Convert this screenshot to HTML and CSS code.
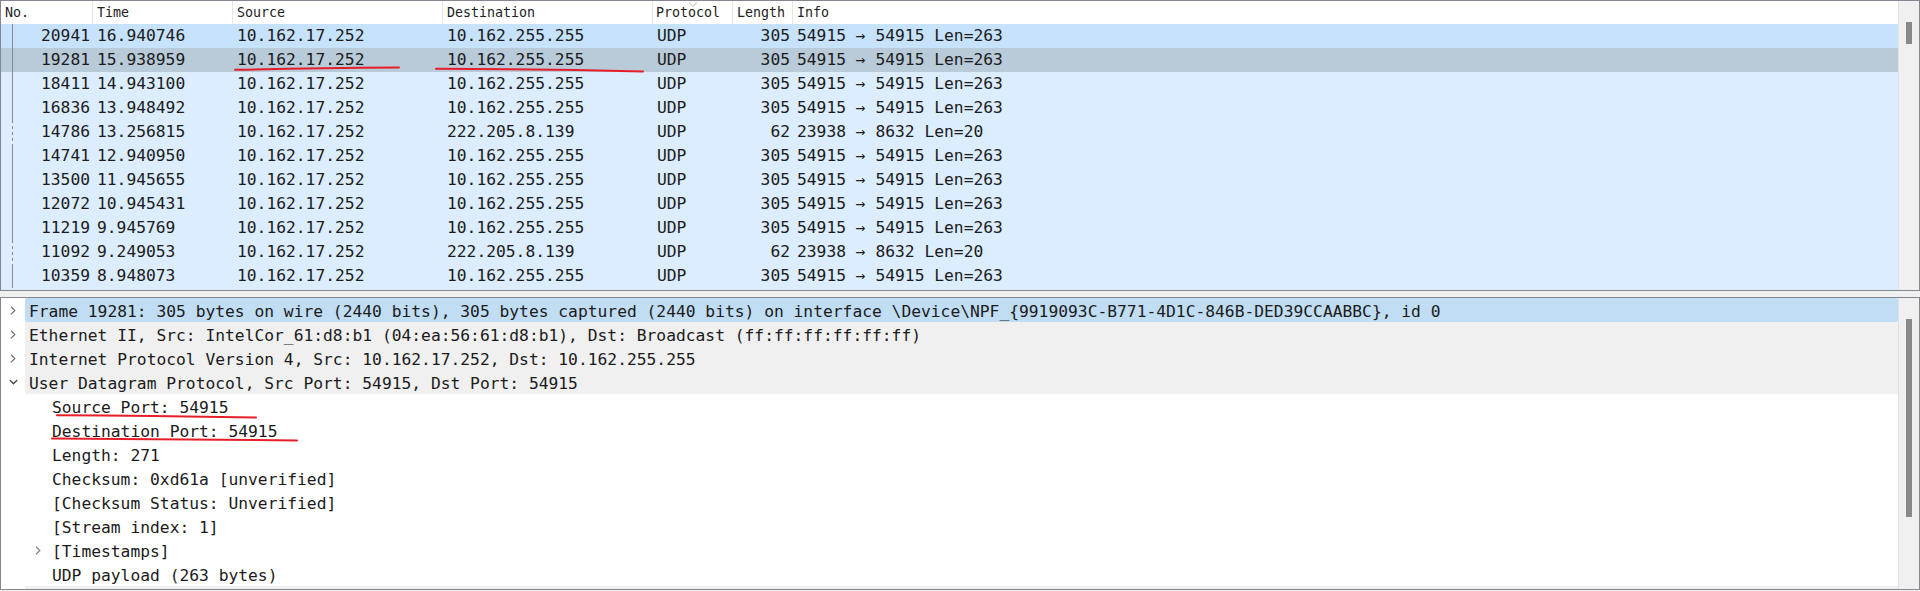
FILE: index.html
```html
<!DOCTYPE html>
<html>
<head>
<meta charset="utf-8">
<link rel="stylesheet" href="styles.css">
</head>
<body>
<section class="pane pane-top">
  <div class="main packet-list">
    <div class="plist-head">
      <div class="hc">No.</div>
      <div class="hc">Time</div>
      <div class="hc">Source</div>
      <div class="hc">Destination</div>
      <div class="hc sorted">Protocol<svg class="sort-ind" width="9" height="5" viewBox="0 0 9 5"><polyline points="0.5,0.5 4.5,4.5 8.5,0.5" fill="none" stroke="#b0b0b0" stroke-width="1"/></svg></div>
      <div class="hc">Length</div>
      <div class="hc last">Info</div>
    </div>
    <div class="prow first"><div class="cell num rel">20941</div><div class="cell">16.940746</div><div class="cell">10.162.17.252</div><div class="cell">10.162.255.255</div><div class="cell">UDP</div><div class="cell len">305</div><div class="cell">54915 → 54915 Len=263</div></div>
    <div class="prow selected"><div class="cell num rel">19281</div><div class="cell">15.938959</div><div class="cell">10.162.17.252</div><div class="cell">10.162.255.255</div><div class="cell">UDP</div><div class="cell len">305</div><div class="cell">54915 → 54915 Len=263</div></div>
    <div class="prow"><div class="cell num rel">18411</div><div class="cell">14.943100</div><div class="cell">10.162.17.252</div><div class="cell">10.162.255.255</div><div class="cell">UDP</div><div class="cell len">305</div><div class="cell">54915 → 54915 Len=263</div></div>
    <div class="prow"><div class="cell num rel">16836</div><div class="cell">13.948492</div><div class="cell">10.162.17.252</div><div class="cell">10.162.255.255</div><div class="cell">UDP</div><div class="cell len">305</div><div class="cell">54915 → 54915 Len=263</div></div>
    <div class="prow"><div class="cell num rel dashed">14786</div><div class="cell">13.256815</div><div class="cell">10.162.17.252</div><div class="cell">222.205.8.139</div><div class="cell">UDP</div><div class="cell len">62</div><div class="cell">23938 → 8632 Len=20</div></div>
    <div class="prow"><div class="cell num rel">14741</div><div class="cell">12.940950</div><div class="cell">10.162.17.252</div><div class="cell">10.162.255.255</div><div class="cell">UDP</div><div class="cell len">305</div><div class="cell">54915 → 54915 Len=263</div></div>
    <div class="prow"><div class="cell num rel">13500</div><div class="cell">11.945655</div><div class="cell">10.162.17.252</div><div class="cell">10.162.255.255</div><div class="cell">UDP</div><div class="cell len">305</div><div class="cell">54915 → 54915 Len=263</div></div>
    <div class="prow"><div class="cell num rel">12072</div><div class="cell">10.945431</div><div class="cell">10.162.17.252</div><div class="cell">10.162.255.255</div><div class="cell">UDP</div><div class="cell len">305</div><div class="cell">54915 → 54915 Len=263</div></div>
    <div class="prow"><div class="cell num rel">11219</div><div class="cell">9.945769</div><div class="cell">10.162.17.252</div><div class="cell">10.162.255.255</div><div class="cell">UDP</div><div class="cell len">305</div><div class="cell">54915 → 54915 Len=263</div></div>
    <div class="prow"><div class="cell num rel dashed">11092</div><div class="cell">9.249053</div><div class="cell">10.162.17.252</div><div class="cell">222.205.8.139</div><div class="cell">UDP</div><div class="cell len">62</div><div class="cell">23938 → 8632 Len=20</div></div>
    <div class="prow"><div class="cell num rel">10359</div><div class="cell">8.948073</div><div class="cell">10.162.17.252</div><div class="cell">10.162.255.255</div><div class="cell">UDP</div><div class="cell len">305</div><div class="cell">54915 → 54915 Len=263</div></div>
  </div>
  <div class="vscroll"><div class="thumb thumb-top"></div></div>
</section>

<section class="pane pane-bottom">
  <div class="main tree">
    <div class="trow sel"><div class="tw"><svg width="6" height="9" viewBox="0 0 6 9"><polyline points="1,0.8 4.8,4.5 1,8.2" fill="none" stroke="#7a7a7a" stroke-width="1.3"/></svg></div><div class="tl">Frame 19281: 305 bytes on wire (2440 bits), 305 bytes captured (2440 bits) on interface \Device\NPF_{9919093C-B771-4D1C-846B-DED39CCAABBC}, id 0</div></div>
    <div class="trow grp"><div class="tw"><svg width="6" height="9" viewBox="0 0 6 9"><polyline points="1,0.8 4.8,4.5 1,8.2" fill="none" stroke="#7a7a7a" stroke-width="1.3"/></svg></div><div class="tl">Ethernet II, Src: IntelCor_61:d8:b1 (04:ea:56:61:d8:b1), Dst: Broadcast (ff:ff:ff:ff:ff:ff)</div></div>
    <div class="trow grp"><div class="tw"><svg width="6" height="9" viewBox="0 0 6 9"><polyline points="1,0.8 4.8,4.5 1,8.2" fill="none" stroke="#7a7a7a" stroke-width="1.3"/></svg></div><div class="tl">Internet Protocol Version 4, Src: 10.162.17.252, Dst: 10.162.255.255</div></div>
    <div class="trow grp"><div class="tw"><svg width="9" height="6" viewBox="0 0 9 6"><polyline points="0.8,1 4.5,4.8 8.2,1" fill="none" stroke="#4a4a4a" stroke-width="1.3"/></svg></div><div class="tl">User Datagram Protocol, Src Port: 54915, Dst Port: 54915</div></div>
    <div class="trow child"><div class="tw"></div><div class="tl"><span class="cw"></span>Source Port: 54915</div></div>
    <div class="trow child"><div class="tw"></div><div class="tl"><span class="cw"></span>Destination Port: 54915</div></div>
    <div class="trow child"><div class="tw"></div><div class="tl"><span class="cw"></span>Length: 271</div></div>
    <div class="trow child"><div class="tw"></div><div class="tl"><span class="cw"></span>Checksum: 0xd61a [unverified]</div></div>
    <div class="trow child"><div class="tw"></div><div class="tl"><span class="cw"></span>[Checksum Status: Unverified]</div></div>
    <div class="trow child"><div class="tw"></div><div class="tl"><span class="cw"></span>[Stream index: 1]</div></div>
    <div class="trow child"><div class="tw"></div><div class="tl"><span class="cw"><svg width="6" height="9" viewBox="0 0 6 9"><polyline points="1,0.8 4.8,4.5 1,8.2" fill="none" stroke="#8a8a8a" stroke-width="1.3"/></svg></span>[Timestamps]</div></div>
    <div class="trow child"><div class="tw"></div><div class="tl"><span class="cw"></span>UDP payload (263 bytes)</div></div>
    <div class="trow grp"><div class="tw"></div><div class="tl"></div></div>
  </div>
  <div class="vscroll"><div class="thumb thumb-bottom"></div></div>
</section>

<svg class="annotations" width="1920" height="591" viewBox="0 0 1920 591">
  <path d="M235,69.8 Q310,68.2 399,67.6" fill="none" stroke="#e61e28" stroke-width="2" stroke-linecap="round"/>
  <path d="M436,68.8 Q540,69.2 643,71.4" fill="none" stroke="#e61e28" stroke-width="2" stroke-linecap="round"/>
  <path d="M57,415.2 Q150,415.6 256,417.4" fill="none" stroke="#e61e28" stroke-width="2" stroke-linecap="round"/>
  <path d="M52,438.6 Q170,439 297,440.4" fill="none" stroke="#e61e28" stroke-width="2" stroke-linecap="round"/>
</svg>
</body>
</html>
```

FILE: styles.css
```css
* { box-sizing: border-box; }
html, body { margin: 0; padding: 0; }
body {
  width: 1920px;
  height: 591px;
  overflow: hidden;
  position: relative;
  background: #f0f0f0;
  font-family: "DejaVu Sans Mono", "Liberation Mono", monospace;
  font-size: 16.3px;
  color: #1b1b1b;
}

.pane {
  display: flex;
  border: 1px solid #828790;
  background: #fff;
  overflow: hidden;
}
.pane-top { height: 291px; }
.pane-bottom { height: 293px; margin-top: 6px; }

.main { flex: 1; min-width: 0; overflow: hidden; display: flex; flex-direction: column; }

.vscroll {
  width: 21px;
  flex: none;
  background: #f0f0f0;
  border-left: 1px solid #e2e2e2;
  padding: 21px 0 0 7px;
}
.thumb { width: 6px; background: #898989; }
.thumb-top { height: 22px; }
.thumb-bottom { height: 198px; }

/* packet list */
.packet-list { background: #dbedfe; }
.plist-head, .prow {
  display: grid;
  grid-template-columns: 92px 140px 210px 210px 80px 60px 1fr;
  white-space: nowrap;
  flex: none;
}
.plist-head {
  height: 23px;
  line-height: 23px;
  background: #fff;
  font-size: 13.3px;
  color: #222;
}
.hc {
  padding-left: 4px;
  border-right: 1px solid #e5e5e5;
  position: relative;
}
.hc.sorted { padding-left: 3px; }
.hc.last { border-right: none; }
.sort-ind {
  position: absolute;
  top: 1px;
  left: 50%;
  transform: translateX(-50%);
}

.prow { height: 24px; line-height: 24px; }
.prow.first { background: #c6e2fc; }
.prow.selected { background: #b9cad9; }
.cell { padding-left: 4px; overflow: hidden; }
.cell.num { text-align: right; padding-left: 0; padding-right: 3px; }
.cell.len { text-align: right; padding-left: 0; padding-right: 3px; }
.cell.rel {
  background: linear-gradient(#8a8a8a, #8a8a8a) 11px 0 / 1px 100% no-repeat;
}
.cell.rel.dashed {
  background: repeating-linear-gradient(to bottom, #8a8a8a 0 3px, transparent 3px 6px) 11px 0 / 1px 100% no-repeat;
}

/* detail tree */
.tree { background: #fff; }
.trow {
  display: flex;
  height: 24px;
  white-space: nowrap;
  flex: none;
}
.tw {
  width: 24px;
  flex: none;
  display: flex;
  align-items: center;
  justify-content: center;
  background: #fff;
}
.tl {
  flex: 1;
  height: 24px;
  padding-left: 4px;
  overflow: hidden;
  display: flex;
  align-items: flex-start;
  line-height: 27px;
}
.trow.sel .tl { background: #c1ddf3; border-radius: 2px; }
.trow.grp .tl { background: #f0f0f0; }
.cw {
  width: 23px;
  flex: none;
  display: flex;
  align-items: center;
  padding-left: 6px;
  height: 24px;
}

.annotations {
  position: absolute;
  left: 0;
  top: 0;
  pointer-events: none;
}
```
